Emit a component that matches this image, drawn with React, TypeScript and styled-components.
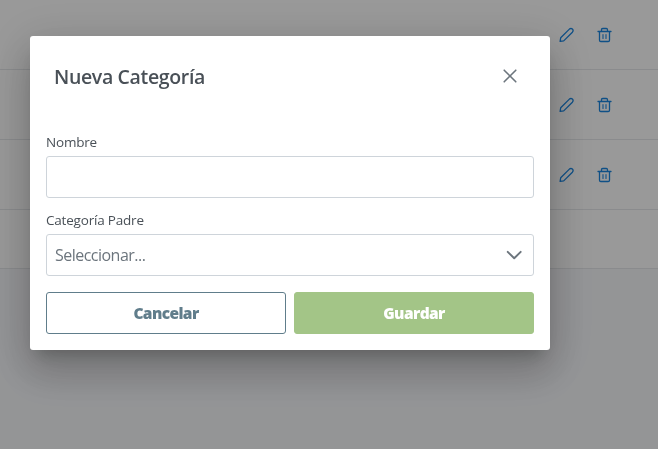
import React from "react";
import styled, { createGlobalStyle } from "styled-components";

const GlobalStyle = createGlobalStyle`
  *, *::before, *::after { box-sizing: border-box; }
  html, body, #root { margin: 0; height: 100%; }
  body {
    overflow: hidden;
    background: #f7f8fb;
    font-family: "Segoe UI", "Open Sans", "Noto Sans", sans-serif;
    color: #495057;
  }
  button, input { font-family: inherit; }
`;

const Page = styled.div`
  height: 100%;
  display: flex;
  flex-direction: column;
`;

const Row = styled.div`
  flex: none;
  height: 70px;
  display: flex;
  align-items: center;
  justify-content: flex-end;
  gap: 22px;
  padding-right: 46px;
  background: #fff;
  border-bottom: 1px solid #e6e8eb;
`;

const Paginator = styled(Row)`
  height: 59px;
`;

const IconButton = styled.button`
  display: flex;
  padding: 0;
  border: 0;
  background: none;
  color: #1a85e0;
`;

const Mask = styled.div`
  position: fixed;
  inset: 0;
  padding: 36px 0 0 30px;
  background: rgba(0, 0, 0, 0.4);
`;

const Dialog = styled.section`
  width: 520px;
  height: 314px;
  display: flex;
  flex-direction: column;
  background: #fff;
  border-radius: 3px;
  box-shadow: 0 11px 15px -7px rgba(0, 0, 0, 0.2),
    0 24px 38px 3px rgba(0, 0, 0, 0.14), 0 9px 46px 8px rgba(0, 0, 0, 0.12);
`;

const Header = styled.header`
  height: 80px;
  display: flex;
  align-items: center;
  justify-content: space-between;
  padding: 0 24px;
`;

const Title = styled.h2`
  margin: 2px 0 0;
  font-size: 19.5px;
  line-height: 28px;
  font-weight: 600;
  letter-spacing: -0.35px;
`;

const CloseButton = styled(IconButton)`
  width: 32px;
  height: 32px;
  align-items: center;
  justify-content: center;
  color: #6c757d;
`;

const Form = styled.form`
  padding: 16px 16px 0;
  display: flex;
  flex-direction: column;
`;

const Field = styled.div`
  height: 78px;
  display: flex;
  flex-direction: column;
`;

const Label = styled.label`
  height: 24px;
  line-height: 20px;
  font-size: 13.5px;
  letter-spacing: -0.2px;
`;

const Input = styled.input`
  width: 100%;
  height: 42px;
  border: 1px solid #ced4da;
  border-radius: 3px;
  background: #fff;
`;

const Select = styled.div`
  height: 42px;
  display: flex;
  align-items: center;
  justify-content: space-between;
  padding: 0 10px 0 8px;
  border: 1px solid #ced4da;
  border-radius: 3px;
  color: #6c757d;
  font-size: 16px;
  letter-spacing: -0.52px;
`;

const Actions = styled.div`
  margin-top: 4px;
  display: grid;
  grid-template-columns: 1fr 1fr;
  gap: 8px;
`;

const Button = styled.button<{ $filled?: boolean }>`
  height: 42px;
  padding: 0;
  border: 1px solid ${(p) => (p.$filled ? "#a3c587" : "#607d8b")};
  border-radius: 3px;
  background: ${(p) => (p.$filled ? "#a3c587" : "#fff")};
  color: ${(p) => (p.$filled ? "#fff" : "#607d8b")};
  font-size: 15.5px;
  font-weight: 800;
  letter-spacing: -0.6px;
`;

const Pencil = () => (
  <svg width="16" height="16" viewBox="0 0 16 16" fill="none" stroke="currentColor" strokeWidth="1.3" strokeLinejoin="round">
    <path d="M2.1 14.4 2.7 10.8 11.4 2.1Q13 .8 14.4 2.1T14.4 5.2L5.7 13.9Z" />
  </svg>
);

const Trash = () => (
  <svg width="16" height="16" viewBox="0 0 16 16" fill="none" stroke="currentColor" strokeWidth="1.3" strokeLinecap="round" strokeLinejoin="round">
    <path d="M2 4.5h13M3.5 4.5v8.7q0 1.3 1.3 1.3h7.4q1.3 0 1.3-1.3V4.5M5.5 4.2V2.7q0-1.2 1.2-1.2h3.6q1.2 0 1.2 1.2v1.5" />
    <path strokeWidth="1.1" d="M7 7.5v4M10 7.5v4" />
  </svg>
);

const Cross = () => (
  <svg width="14" height="14" viewBox="0 0 14 14" fill="none" stroke="currentColor" strokeWidth="1.6" strokeLinecap="round">
    <path d="m1.2 1.2 11.6 11.6M12.8 1.2 1.2 12.8" />
  </svg>
);

const Chevron = () => (
  <svg width="18" height="16" viewBox="0 0 18 16" fill="none" stroke="#6c757d" strokeWidth="2" strokeLinecap="round" strokeLinejoin="round">
    <path d="M2.7 4.9 9.2 11.2l6.5-6.3" />
  </svg>
);

export default function App() {
  return (
    <>
      <GlobalStyle />
      <Page>
        {[1, 2, 3].map((id) => (
          <Row key={id}>
            <IconButton aria-label="Editar"><Pencil /></IconButton>
            <IconButton aria-label="Eliminar"><Trash /></IconButton>
          </Row>
        ))}
        <Paginator />
      </Page>
      <Mask>
        <Dialog role="dialog" aria-labelledby="dialog-title">
          <Header>
            <Title id="dialog-title">Nueva Categoría</Title>
            <CloseButton aria-label="Cerrar"><Cross /></CloseButton>
          </Header>
          <Form>
            <Field>
              <Label htmlFor="name">Nombre</Label>
              <Input id="name" />
            </Field>
            <Field>
              <Label>Categoría Padre</Label>
              <Select>
                <span>Seleccionar...</span>
                <Chevron />
              </Select>
            </Field>
            <Actions>
              <Button type="button">Cancelar</Button>
              <Button type="button" $filled>Guardar</Button>
            </Actions>
          </Form>
        </Dialog>
      </Mask>
    </>
  );
}
